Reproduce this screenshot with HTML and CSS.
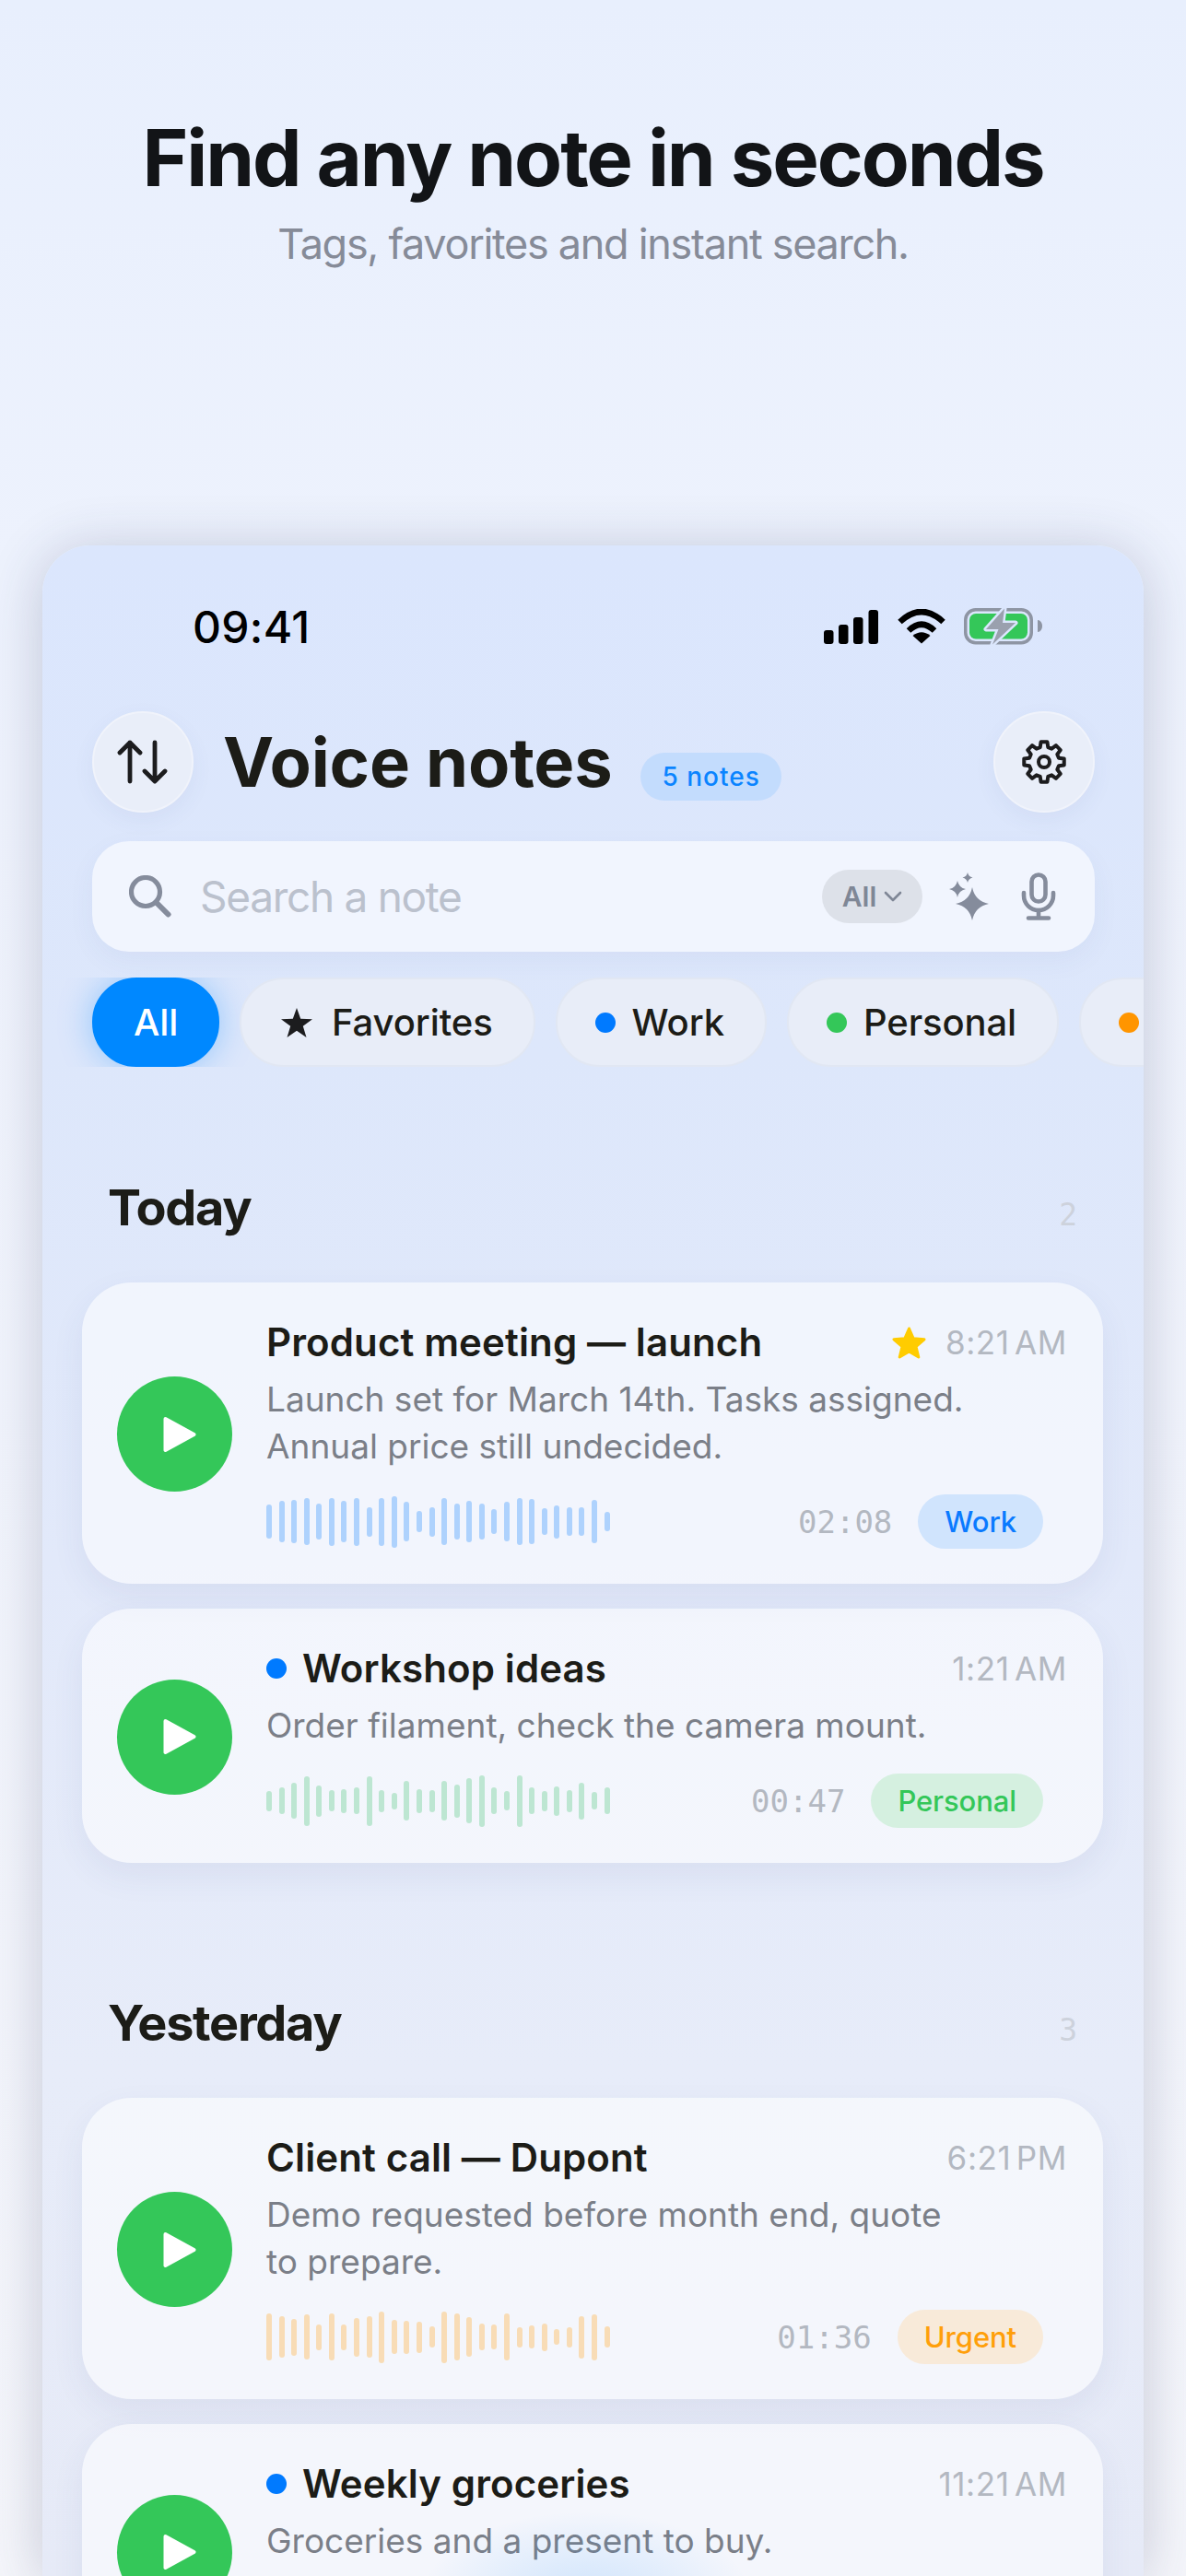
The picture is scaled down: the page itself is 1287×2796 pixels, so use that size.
FILE: index.html
```html
<!DOCTYPE html>
<html lang="en">
<head>
<meta charset="utf-8">
<title>Voice notes</title>
<link rel="stylesheet" href="styles.css">
</head>
<body>
<main class="page">
  <header class="hero">
    <h1 class="hero-title">Find any note in seconds</h1>
    <p class="hero-sub">Tags, favorites and instant search.</p>
  </header>

  <section class="phone">
    <div class="status">
      <span class="clock">09:41</span>
      <div class="status-icons">
        <svg class="ic-signal" width="60" height="38" viewBox="0 0 60 38"><rect x="0" y="23" width="10.5" height="15" rx="3"/><rect x="16" y="17" width="10.5" height="21" rx="3"/><rect x="32" y="9" width="10.5" height="29" rx="3"/><rect x="48.5" y="1" width="10.5" height="37" rx="3"/></svg>
        <svg class="ic-wifi" width="52" height="38" viewBox="0 0 52 38"><path d="M2.5 14Q26-8 49.5 14" fill="none" stroke="#000" stroke-width="6.5"/><path d="M12 23.500Q26 10 40 23.500" fill="none" stroke="#000" stroke-width="6.5"/><path d="M26 37.500 16.500 29Q26 21.500 35.500 29Z"/></svg>
        <svg class="ic-battery" width="85" height="40" viewBox="0 0 85 40"><rect x="1.750" y="1.750" width="71.500" height="36" rx="11" fill="none" stroke="#8e95a3" stroke-width="3.500"/><rect x="6" y="6" width="63" height="27.500" rx="7" fill="#34c759"/><path d="M80 13c3 0 5 3 5 6.500s-2 6.500-5 6.500z" fill="#8e95a3"/><path d="M44 .5 24 23H37.500L31 39.500 56 16H42Z" fill="#9aa0ae" stroke="#dbe6fd" stroke-width="5" stroke-linejoin="round" paint-order="stroke"/></svg>
      </div>
    </div>

    <div class="topbar">
      <button class="round-btn" type="button" aria-label="Sort">
        <svg width="56" height="48" viewBox="0 0 56 48" fill="none" stroke="#1c1c1e" stroke-width="4.800" stroke-linecap="round" stroke-linejoin="round"><path d="M14 45V3M3 14 14 3 25 14"/><path d="M41 3V45M30 34 41 45 52 34"/></svg>
      </button>
      <h2 class="app-title">Voice notes</h2>
      <span class="count-badge">5 notes</span>
      <button class="round-btn settings" type="button" aria-label="Settings">
        <svg width="50" height="50" viewBox="0 0 50 50" fill="none" stroke="#1c1c1e" stroke-width="4" stroke-linejoin="round"><polygon points="21.56,3.27 28.44,3.27 29.27,9.06 33.25,10.71 37.93,7.2 42.8,12.07 39.29,16.75 40.94,20.73 46.73,21.56 46.73,28.44 40.94,29.27 39.29,33.25 42.8,37.93 37.93,42.8 33.25,39.29 29.27,40.94 28.44,46.73 21.56,46.73 20.73,40.94 16.75,39.29 12.07,42.8 7.2,37.93 10.71,33.25 9.06,29.27 3.27,28.44 3.27,21.56 9.06,20.73 10.71,16.75 7.2,12.07 12.07,7.2 16.75,10.71 20.73,9.06"/><circle cx="25" cy="25" r="6"/></svg>
      </button>
    </div>

    <div class="search">
      <svg class="search-ic" width="46" height="46" viewBox="0 0 46 46" fill="none" stroke="#858c9c" stroke-linecap="round"><circle cx="18" cy="18" r="15.500" stroke-width="5.200"/><path d="M30 30 42.500 42.500" stroke-width="6"/></svg>
      <span class="search-text">Search a note</span>
      <span class="scope">All<svg width="20" height="12" viewBox="0 0 20 12" fill="none" stroke="#7f8796" stroke-width="2.600" stroke-linecap="round" stroke-linejoin="round"><path d="M2 2 10 10 18 2"/></svg></span>
      <svg class="spark" width="44" height="52" viewBox="0 0 44 52" fill="#858c9c"><path d="M25 16Q28 31 43 34 28 37 25 52 22 37 7 34 22 31 25 16Z"/><path d="M9 9Q10.500 16.500 18 18 10.500 19.500 9 27 7.500 19.500 0 18 7.500 16.500 9 9Z"/><path d="M20 0Q21 4.500 25.500 5.500 21 6.500 20 11 19 6.500 14.500 5.500 19 4.500 20 0Z"/></svg>
      <svg class="mic" width="38" height="52" viewBox="0 0 38 52" fill="none" stroke="#858c9c" stroke-width="4.600" stroke-linecap="round"><rect x="11.500" y="2.500" width="15" height="29" rx="7.500"/><path d="M3 22v3a16 16 0 0 0 32 0v-3"/><path d="M19 41v8M8 49.500H30"/></svg>
    </div>

    <nav class="chips">
      <span class="chip chip-on">All</span>
      <span class="chip"><svg class="chip-star" width="34" height="32" viewBox="0 0 34 32" fill="#1c1c1e"><polygon points="17,0 21.200,11.800 34,12.200 23.800,19.800 27.500,32 17,24.800 6.500,32 10.200,19.800 0,12.200 12.800,11.800"/></svg>Favorites</span>
      <span class="chip"><i class="dot dot-blue"></i>Work</span>
      <span class="chip"><i class="dot dot-green"></i>Personal</span>
      <span class="chip"><i class="dot dot-orange"></i>Urgent</span>
    </nav>

    <div class="days">
      <section class="day">
        <div class="day-head"><h3 class="day-name">Today</h3><span class="day-count">2</span></div>
        <div class="cards">
          <article class="card">
            <span class="play"><svg width="36" height="40" viewBox="0 0 36 40" fill="#fff" stroke="#fff" stroke-width="4" stroke-linejoin="round"><path d="M2.500 3 33.500 20 2.500 37Z"/></svg></span>
            <div class="body">
              <div class="row">
                <h4 class="note-title">Product meeting — launch</h4>
                <svg class="fav" width="37" height="35" viewBox="0 0 37 35" fill="#ffcc00" stroke="#ffcc00" stroke-width="3" stroke-linejoin="round"><polygon points="18.500,2 23.200,12.800 35,13.800 26,21.500 28.800,33 18.500,26.900 8.200,33 11,21.500 2,13.800 13.800,12.800"/></svg>
                <time class="when">8:21&nbsp;AM</time>
              </div>
              <p class="desc">Launch set for March 14th. Tasks assigned.<br>Annual price still undecided.</p>
              <div class="meta">
                <div class="wave wave-blue"><i style="height:37px"></i><i style="height:45px"></i><i style="height:47px"></i><i style="height:51px"></i><i style="height:39px"></i><i style="height:52px"></i><i style="height:45px"></i><i style="height:52px"></i><i style="height:32px"></i><i style="height:52px"></i><i style="height:56px"></i><i style="height:43px"></i><i style="height:23px"></i><i style="height:32px"></i><i style="height:51px"></i><i style="height:39px"></i><i style="height:45px"></i><i style="height:39px"></i><i style="height:27px"></i><i style="height:43px"></i><i style="height:51px"></i><i style="height:49px"></i><i style="height:29px"></i><i style="height:36px"></i><i style="height:31px"></i><i style="height:31px"></i><i style="height:47px"></i><i style="height:21px"></i></div>
                <span class="dur">02:08</span>
                <span class="tag tag-work">Work</span>
              </div>
            </div>
          </article>

          <article class="card">
            <span class="play"><svg width="36" height="40" viewBox="0 0 36 40" fill="#fff" stroke="#fff" stroke-width="4" stroke-linejoin="round"><path d="M2.500 3 33.500 20 2.500 37Z"/></svg></span>
            <div class="body">
              <div class="row">
                <i class="dot dot-blue dot-title"></i>
                <h4 class="note-title">Workshop ideas</h4>
                <time class="when push">1:21&nbsp;AM</time>
              </div>
              <p class="desc">Order filament, check the camera mount.</p>
              <div class="meta">
                <div class="wave wave-green"><i style="height:22px"></i><i style="height:29px"></i><i style="height:39px"></i><i style="height:54px"></i><i style="height:34px"></i><i style="height:23px"></i><i style="height:26px"></i><i style="height:29px"></i><i style="height:54px"></i><i style="height:24px"></i><i style="height:18px"></i><i style="height:43px"></i><i style="height:26px"></i><i style="height:24px"></i><i style="height:43px"></i><i style="height:36px"></i><i style="height:49px"></i><i style="height:56px"></i><i style="height:29px"></i><i style="height:21px"></i><i style="height:56px"></i><i style="height:29px"></i><i style="height:22px"></i><i style="height:32px"></i><i style="height:24px"></i><i style="height:40px"></i><i style="height:19px"></i><i style="height:29px"></i></div>
                <span class="dur">00:47</span>
                <span class="tag tag-personal">Personal</span>
              </div>
            </div>
          </article>
        </div>
      </section>

      <section class="day">
        <div class="day-head"><h3 class="day-name">Yesterday</h3><span class="day-count">3</span></div>
        <div class="cards">
          <article class="card">
            <span class="play"><svg width="36" height="40" viewBox="0 0 36 40" fill="#fff" stroke="#fff" stroke-width="4" stroke-linejoin="round"><path d="M2.500 3 33.500 20 2.500 37Z"/></svg></span>
            <div class="body">
              <div class="row">
                <h4 class="note-title">Client call — Dupont</h4>
                <time class="when push">6:21&nbsp;PM</time>
              </div>
              <p class="desc">Demo requested before month end, quote<br>to prepare.</p>
              <div class="meta">
                <div class="wave wave-orange"><i style="height:51px"></i><i style="height:45px"></i><i style="height:40px"></i><i style="height:49px"></i><i style="height:28px"></i><i style="height:51px"></i><i style="height:28px"></i><i style="height:42px"></i><i style="height:45px"></i><i style="height:56px"></i><i style="height:37px"></i><i style="height:36px"></i><i style="height:34px"></i><i style="height:23px"></i><i style="height:56px"></i><i style="height:51px"></i><i style="height:43px"></i><i style="height:29px"></i><i style="height:27px"></i><i style="height:51px"></i><i style="height:22px"></i><i style="height:25px"></i><i style="height:30px"></i><i style="height:17px"></i><i style="height:22px"></i><i style="height:46px"></i><i style="height:50px"></i><i style="height:23px"></i></div>
                <span class="dur">01:36</span>
                <span class="tag tag-urgent">Urgent</span>
              </div>
            </div>
          </article>

          <article class="card">
            <span class="play"><svg width="36" height="40" viewBox="0 0 36 40" fill="#fff" stroke="#fff" stroke-width="4" stroke-linejoin="round"><path d="M2.500 3 33.500 20 2.500 37Z"/></svg></span>
            <div class="body">
              <div class="row">
                <i class="dot dot-blue dot-title"></i>
                <h4 class="note-title">Weekly groceries</h4>
                <time class="when push">11:21&nbsp;AM</time>
              </div>
              <p class="desc">Groceries and a present to buy.</p>
              <div class="meta"></div>
            </div>
          </article>
        </div>
      </section>
    </div>

    <div class="rec-glow"></div>
  </section>
</main>
</body>
</html>
```
FILE: styles.css
```css
* { box-sizing: border-box; }
html, body { margin: 0; padding: 0; }
body {
  font-family: Inter, "Liberation Sans", sans-serif;
  color: #1c1c1e;
  background: linear-gradient(180deg, #e8effd 0%, #eff3fd 30%, #f5f6fb 100%);
}
h1, h2, h3, h4, p { margin: 0; }
.page { height: 2796px; overflow: hidden; }

.hero { padding-top: 122px; text-align: center; }
.hero-title {
  font-size: 85px; line-height: 100px; font-weight: 700;
  color: #121417; letter-spacing: -2.1px;
}
.hero-sub {
  margin-top: 15px; font-size: 45px; line-height: 56px; font-weight: 400;
  color: #868b98; letter-spacing: -1.3px;
}

.phone {
  position: relative;
  margin: 299px 46px 0;
  height: 2204px;
  border-radius: 52px 52px 0 0;
  overflow: hidden;
  background: linear-gradient(180deg, #dbe6fd 0%, #dde7fb 25%, #e2e9fa 50%, #e7ecf9 75%, #e6eaf7 100%);
  box-shadow: 0 6px 60px rgba(45, 55, 95, .24);
}

.status {
  display: flex; justify-content: space-between; align-items: flex-start;
  height: 180px; padding: 60px 110px 0 163px;
}
.clock { font-size: 48px; line-height: 58px; font-weight: 550; color: #000; letter-spacing: .3px; }
.status-icons { display: flex; align-items: flex-end; gap: 20px; margin-top: 8px; }
.ic-signal, .ic-wifi { display: block; }
.ic-battery { display: block; margin-bottom: -1px; }

.topbar { display: flex; align-items: flex-start; height: 110px; padding: 0 53px 0 54px; }
.round-btn {
  flex: none; display: flex; align-items: center; justify-content: center;
  width: 110px; height: 110px; padding: 0; border-radius: 50%;
  background: #e9eef9; border: 2px solid #f0f3fb;
  box-shadow: 0 8px 24px rgba(60, 80, 130, .06);
}
.settings { margin-left: auto; }
.app-title {
  margin-left: 32px; font-size: 74px; line-height: 110px; font-weight: 700;
  color: #1c1c17; letter-spacing: -.2px;
}
.count-badge {
  margin: 45px 0 0 31px; height: 52px; padding: 0 23px;
  display: flex; align-items: center;
  border-radius: 26px; background: #c3dcfd; color: #0a84ff;
  font-size: 28px; font-weight: 500; letter-spacing: 1px;
}

.search {
  display: flex; align-items: center;
  height: 120px; margin: 31px 53px 0 54px; padding: 0 42px 0 40px;
  border-radius: 40px; background: #f1f5fe;
  box-shadow: 0 10px 30px rgba(60, 80, 130, .05);
}
.search-ic { flex: none; }
.search-text { margin-left: 31px; font-size: 46px; color: #bbc1cd; letter-spacing: -1.3px; }
.scope {
  display: flex; align-items: center; gap: 8px;
  margin-left: auto; width: 109px; height: 58px; justify-content: center;
  border-radius: 29px; background: #dde1e9; color: #7f8796;
  font-size: 30px; font-weight: 600;
}
.spark { margin-left: 29px; flex: none; }
.mic { margin-left: 34px; flex: none; }

.chips {
  display: flex; gap: 22px; height: 97px; margin-top: 28px; padding-left: 54px;
  overflow: hidden;
}
.chip {
  flex: none; display: flex; align-items: center; gap: 18px;
  height: 97px; padding: 0 44px 0 41px;
  border-radius: 48px; background: #e8edf8; border: 2px solid #e1e7f3;
  font-size: 40px; font-weight: 500; color: #1c1c17; letter-spacing: -.1px;
}
.chip-star { margin: 0 3px 0 2px; }
.chip-on {
  width: 138px; justify-content: center; padding: 0;
  background: #0088ff; border-color: #0088ff; color: #fff;
  box-shadow: 0 0 36px rgba(0, 136, 255, .35);
}
.dot { flex: none; display: block; width: 22px; height: 22px; border-radius: 50%; }
.dot-blue { background: #007aff; }
.dot-green { background: #34c759; }
.dot-orange { background: #ff9500; }
.dot-title { margin-right: 17px; }

.days { display: flex; flex-direction: column; gap: 141px; padding: 120px 44px 0 43px; }
.day-head { display: flex; justify-content: space-between; align-items: baseline; padding: 0 28px 0 28px; }
.day-name { font-size: 54px; line-height: 66px; font-weight: 700; color: #1c1c17; letter-spacing: -1.3px; }
.day-count { font-family: "DejaVu Sans Mono", monospace; font-size: 33px; color: #cdd2dc; }
.cards { display: flex; flex-direction: column; gap: 27px; margin-top: 48px; }

.card {
  display: flex; align-items: center; gap: 37px;
  padding: 40px 39px 38px 38px;
  border-radius: 54px;
  background: rgba(255, 255, 255, .56);
  box-shadow: 0 14px 36px rgba(60, 75, 125, .07);
}
.play {
  flex: none; display: flex; align-items: center; justify-content: center;
  width: 125px; height: 125px; border-radius: 50%; background: #34c759;
  padding-left: 10px;
}
.body { flex: 1; min-width: 0; }
.row { display: flex; align-items: center; height: 50px; }
.note-title { font-size: 42px; line-height: 50px; font-weight: 560; color: #1c1c17; letter-spacing: .12px; }
.fav { margin-left: auto; margin-right: 21px; flex: none; }
.when { font-size: 35px; color: #b3b8c1; word-spacing: -5px; letter-spacing: .6px; }
.push { margin-left: auto; }
.desc { margin-top: 11px; font-size: 37px; line-height: 51px; color: #7b7f88; letter-spacing: 0; }

.meta { display: flex; align-items: center; gap: 28px; height: 59px; margin-top: 27px; padding-right: 26px; }
.wave { display: flex; align-items: center; gap: 7.580px; margin-right: auto; }
.wave i { display: block; flex: none; width: 6px; border-radius: 3px; }
.wave-blue i { background: #aed2fd; }
.wave-green i { background: #bde6d2; }
.wave-orange i { background: #f8dcb6; }
.dur { font-family: "DejaVu Sans Mono", monospace; font-size: 34px; color: #b3b8c1; }
.tag {
  display: flex; align-items: center; height: 59px; padding: 0 29px;
  border-radius: 30px; font-size: 31px; font-weight: 550; letter-spacing: -.1px;
}
.tag-work { background: #d0e4fd; color: #0a7aff; }
.tag-personal { background: #d5f0e0; color: #34c759; }
.tag-urgent { background: #f8ead9; color: #ff9f0a; }

.rec-glow {
  position: absolute; left: 50%; bottom: -120px;
  width: 360px; height: 190px; margin-left: -188px;
  background: radial-gradient(closest-side, rgba(10, 132, 255, .16), rgba(10, 132, 255, 0));
}
```
